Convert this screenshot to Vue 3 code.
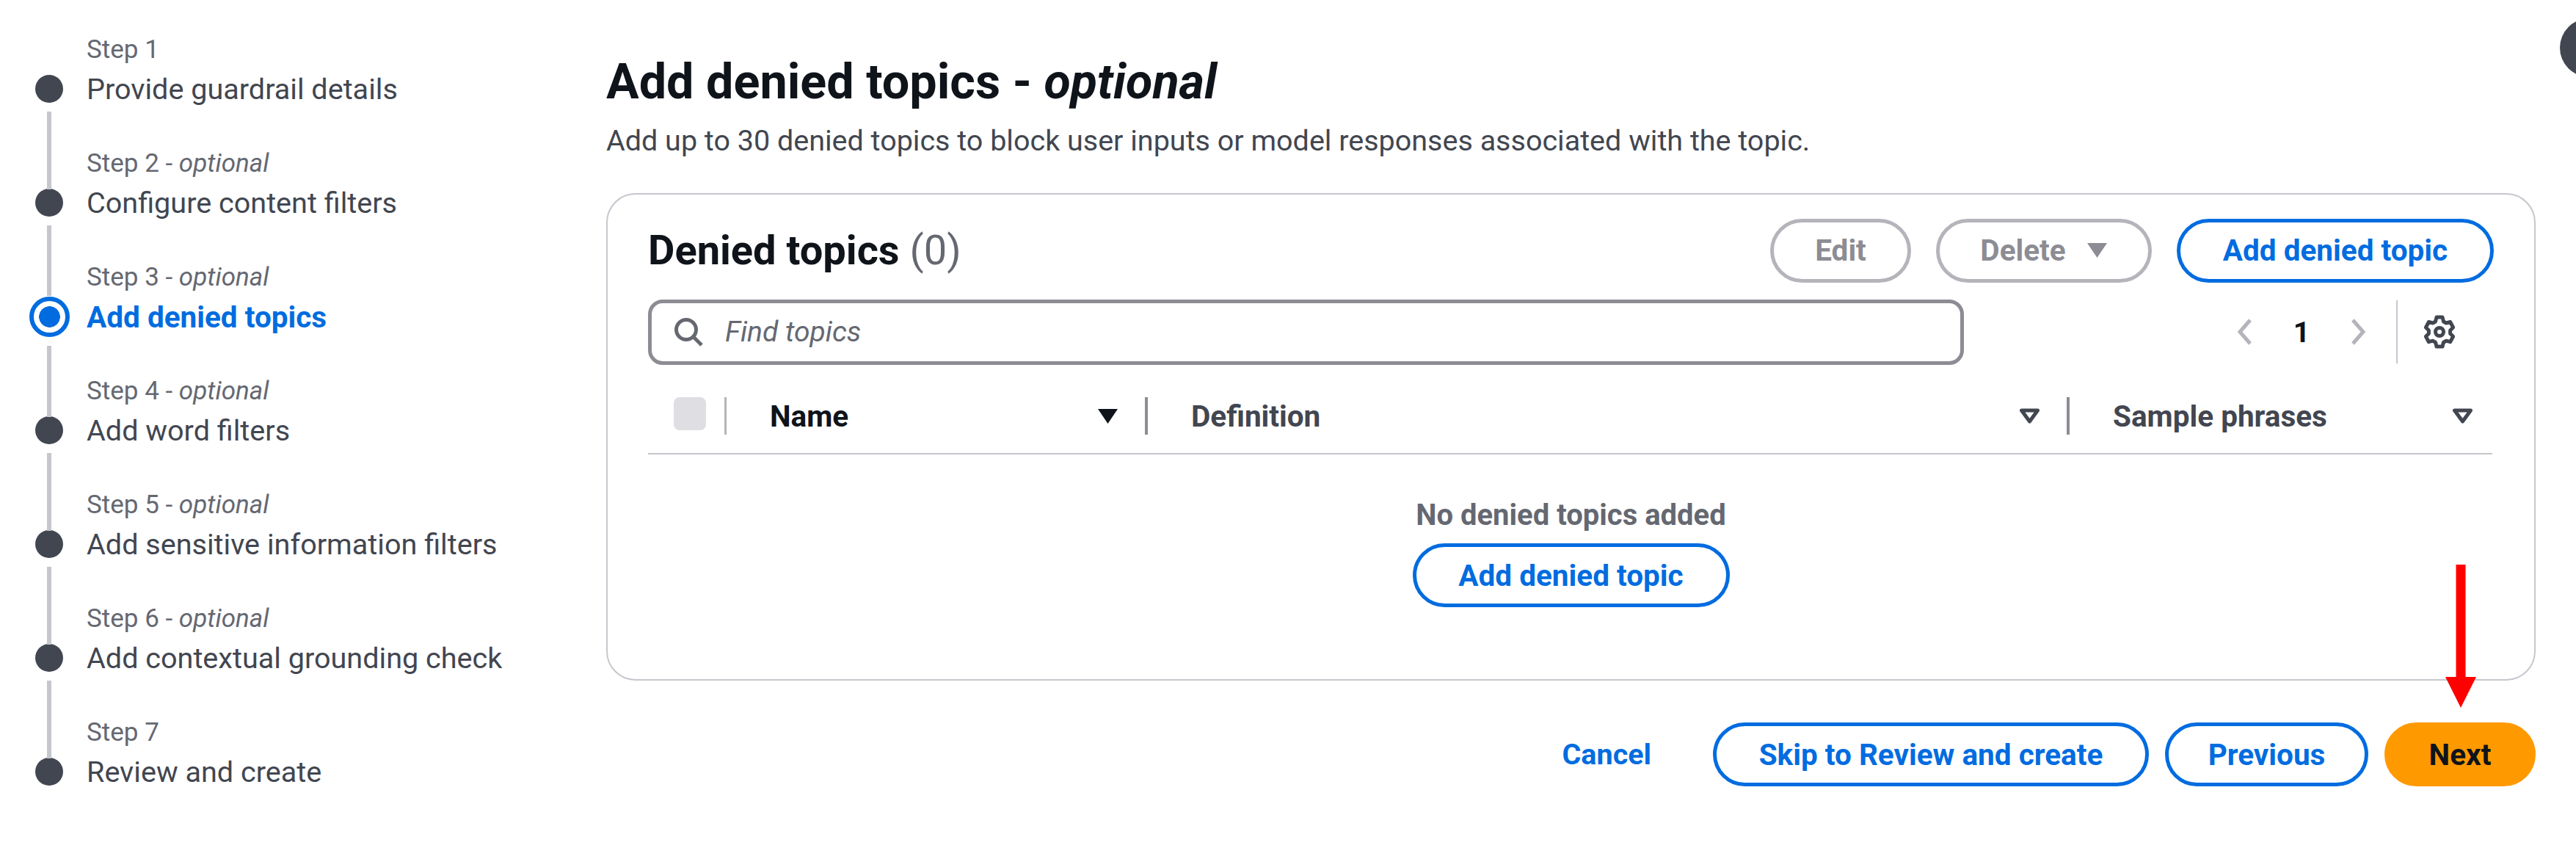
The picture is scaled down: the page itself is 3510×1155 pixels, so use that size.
<script setup>
const steps = [
  { label: 'Step 1', title: 'Provide guardrail details' },
  { label: 'Step 2', optional: true, title: 'Configure content filters' },
  { label: 'Step 3', optional: true, title: 'Add denied topics', active: true },
  { label: 'Step 4', optional: true, title: 'Add word filters' },
  { label: 'Step 5', optional: true, title: 'Add sensitive information filters' },
  { label: 'Step 6', optional: true, title: 'Add contextual grounding check' },
  { label: 'Step 7', title: 'Review and create' },
]
</script>

<template>
  <div class="page">
    <nav class="wizard">
      <div v-for="(s, i) in steps" :key="s.label" class="step" :class="{ active: s.active, first: i === 0 }">
        <div class="step-label">{{ s.label }}<template v-if="s.optional"> - <i>optional</i></template></div>
        <div class="step-row">
          <span class="marker"><span class="dot"></span></span>
          <span class="step-title">{{ s.title }}</span>
        </div>
      </div>
    </nav>

    <main class="main">
      <h1 class="page-title">Add denied topics - <i>optional</i></h1>
      <p class="page-desc">Add up to 30 denied topics to block user inputs or model responses associated with the topic.</p>

      <section class="card">
        <header class="card-head">
          <h2 class="card-title">Denied topics <span class="count">(0)</span></h2>
          <div class="actions">
            <button class="btn disabled edit">Edit</button>
            <button class="btn disabled del">Delete
              <svg class="caret" viewBox="0 0 29 22"><path d="M1 1h27L14.500 21z" fill="currentColor" /></svg>
            </button>
            <button class="btn add">Add denied topic</button>
          </div>
        </header>

        <div class="tools">
          <div class="search">
            <svg class="search-icon" viewBox="0 0 40 40" fill="none" stroke="#656871" stroke-width="5">
              <circle cx="17" cy="17" r="13.500" />
              <path d="M26.500 26.500 38 38" />
            </svg>
            <span class="placeholder">Find topics</span>
          </div>
          <div class="pager">
            <svg class="chev" viewBox="0 0 22 36" fill="none" stroke="#b4b4bb" stroke-width="5"><path d="M19 2 5 18l14 16" /></svg>
            <span class="page-num">1</span>
            <svg class="chev" viewBox="0 0 22 36" fill="none" stroke="#b4b4bb" stroke-width="5"><path d="M3 2l14 16L3 34" /></svg>
          </div>
          <div class="prefs">
            <svg class="gear" viewBox="0 0 44 46" fill="none" stroke="#424650" stroke-width="5" stroke-linejoin="round">
              <path d="M18 3h8l1.500 6 3.600 2 5.500-1.500 4 7.500-4 4v4.200l4 4-4 7.500-5.500-1.500-3.600 2L26 43h-8l-1.500-5.800-3.600-2-5.500 1.500-4-7.500 4-4v-4.200l-4-4 4-7.500 5.500 1.500 3.600-2z" />
              <circle cx="22" cy="23" r="5.500" />
            </svg>
          </div>
        </div>

        <div class="thead">
          <div class="th-check"><span class="checkbox"></span></div>
          <div class="th th-name">
            <span class="th-text dark">Name</span>
            <svg class="sort" viewBox="0 0 29 22"><path d="M1 1h27L14.500 21z" fill="#0f141a" /></svg>
          </div>
          <div class="th th-def">
            <span class="th-text">Definition</span>
            <svg class="sort" viewBox="0 0 29 22"><path d="M3.500 3h22L14.500 18z" fill="none" stroke="#424650" stroke-width="5" stroke-linejoin="round" /></svg>
          </div>
          <div class="th th-sample">
            <span class="th-text">Sample phrases</span>
            <svg class="sort" viewBox="0 0 29 22"><path d="M3.500 3h22L14.500 18z" fill="none" stroke="#424650" stroke-width="5" stroke-linejoin="round" /></svg>
          </div>
        </div>

        <div class="empty">
          <div class="empty-text">No denied topics added</div>
          <button class="btn add">Add denied topic</button>
        </div>
      </section>

      <footer class="footer">
        <a class="cancel">Cancel</a>
        <button class="btn skip">Skip to Review and create</button>
        <button class="btn prev">Previous</button>
        <div class="next-wrap">
          <svg class="arrow" viewBox="0 0 42 195"><path d="M14.500 0h13v153H42L21 195 0 153h14.500z" fill="#ff0000" /></svg>
          <button class="btn next">Next</button>
        </div>
      </footer>
    </main>

    <span class="avatar"></span>
  </div>
</template>

<style>
html, body { background: #fff; }
</style>

<style scoped>
.page {
  position: relative;
  display: flex;
  width: 3510px;
  height: 1155px;
  overflow: hidden;
  font-family: Roboto, "Open Sans", sans-serif;
  font-size: 39.6px;
  color: #424650;
}

/* wizard side nav */
.wizard {
  width: 826px;
  flex: none;
  padding: 40px 0 0 39px;
  box-sizing: border-box;
}
.step {
  position: relative;
  height: 155px;
}
.step-label {
  height: 54px;
  line-height: 55px;
  padding-left: 79px;
  font-size: 35px;
  color: #656871;
}
.step-row {
  display: flex;
  align-items: center;
  height: 54px;
}
.marker {
  width: 56px;
  height: 54px;
  margin-right: 23px;
  display: flex;
  align-items: center;
  justify-content: center;
  flex: none;
}
.dot {
  width: 38px;
  height: 38px;
  border-radius: 50%;
  background: #424650;
}
.step-title {
  line-height: 50px;
  margin-top: 1px;
}
.step:not(.first)::before {
  content: "";
  position: absolute;
  left: 25px;
  top: -43px;
  width: 6px;
  height: 106px;
  background: #c6c6cd;
}
.step.active .dot {
  width: 55px;
  height: 55px;
  box-sizing: border-box;
  border: 6px solid #006ce0;
  background: radial-gradient(circle, #006ce0 0 14px, #fff 14.6px);
}
.step.active .step-title {
  color: #006ce0;
  font-weight: 700;
  font-size: 40.5px;
}
.step.active::before { height: 96px; }
.step.active + .step::before { top: -34px; height: 97px; }

/* main column */
.main {
  flex: none;
  width: 2629px;
  display: flex;
  flex-direction: column;
}
.page-title {
  margin: 75px 0 0;
  font-size: 66.5px;
  line-height: 72px;
  font-weight: 700;
  color: #0f141a;
}
.page-desc {
  margin: 0;
  padding-top: 20px;
  font-size: 39.5px;
  line-height: 50px;
  color: #424650;
}
.card {
  margin-top: 46px;
  height: 664px;
  box-sizing: border-box;
  border: 2px solid #c6c6cd;
  border-radius: 40px;
  padding: 33px 55px 0;
  background: #fff;
}
.card-head {
  display: flex;
  align-items: center;
  justify-content: space-between;
  height: 86px;
}
.card-title {
  margin: 0;
  font-size: 56px;
  font-weight: 700;
  color: #0f141a;
}
.count {
  font-weight: 400;
  color: #656871;
}
.actions {
  display: flex;
  gap: 34px;
}
.btn {
  height: 87px;
  box-sizing: border-box;
  border: 5px solid #006ce0;
  border-radius: 44px;
  background: #fff;
  color: #006ce0;
  font-family: inherit;
  font-size: 40.5px;
  font-weight: 700;
  padding: 0;
  display: inline-flex;
  align-items: center;
  justify-content: center;
}
.btn.disabled {
  border-color: #b4b4bb;
  color: #8c8c94;
}
.edit { width: 192px; }
.del { width: 294px; gap: 28px; }
.caret { width: 29px; height: 22px; color: #8c8c94; }
.add { width: 432px; }

.tools {
  display: flex;
  align-items: center;
  height: 90px;
  margin-top: 23px;
}
.search {
  width: 1793px;
  height: 89px;
  box-sizing: border-box;
  border: 5px solid #8c8c94;
  border-radius: 20px;
  display: flex;
  align-items: center;
  padding-left: 30px;
  gap: 30px;
}
.search-icon { width: 40px; height: 40px; }
.placeholder {
  font-style: italic;
  font-size: 39px;
  color: #656871;
}
.pager {
  margin-left: 371px;
  display: flex;
  align-items: center;
  gap: 55px;
  flex: none;
}
.chev { width: 22px; height: 36px; }
.page-num {
  color: #0f141a;
  font-weight: 700;
  width: 24px;
  text-align: center;
}
.prefs {
  margin-left: 40px;
  border-left: 2px solid #c6c6cd;
  height: 86px;
  padding-left: 35px;
  display: flex;
  align-items: center;
}
.gear { width: 44px; height: 46px; }

.thead {
  display: flex;
  align-items: flex-start;
  margin-top: 44px;
  height: 76px;
  border-bottom: 2px solid #c6c6cd;
  width: 2513px;
}
.th-check {
  width: 107px;
  display: flex;
  padding-left: 35px;
  box-sizing: border-box;
  height: 51px;
  position: relative;
}
.checkbox {
  width: 44px;
  height: 45px;
  border-radius: 8px;
  background: #dedee3;
}
.th-check::after,
.th::after {
  content: "";
  position: absolute;
  right: 0;
  top: 0;
  width: 4px;
  height: 51px;
  background: #8c8c94;
}
.th {
  position: relative;
  display: flex;
  align-items: center;
  height: 51px;
  box-sizing: border-box;
  flex: none;
  justify-content: space-between;
  padding-right: 40px;
}
.th-check::after { width: 3px; background: #b4b4bb; }
.th-name { width: 574px; padding-left: 59px; }
.th-def { width: 1256px; padding-left: 59px; }
.th-sample { width: 576px; padding-left: 59px; padding-right: 26px; }
.th-sample::after { display: none; }
.th-text {
  font-weight: 700;
  color: #424650;
  font-size: 40.5px;
}
.th-text.dark { color: #0f141a; }
.sort { width: 29px; height: 22px; flex: none; }

.empty {
  display: flex;
  flex-direction: column;
  align-items: center;
  margin-top: 56px;
}
.empty-text {
  font-weight: 700;
  color: #656871;
  font-size: 40px;
  line-height: 54px;
  margin-bottom: 11px;
}

.footer {
  display: flex;
  align-items: center;
  justify-content: flex-end;
  gap: 22px;
  margin-top: 57px;
}
.cancel {
  color: #006ce0;
  font-weight: 700;
  font-size: 39.5px;
  margin-right: 62px;
}
.skip { width: 594px; }
.prev { width: 277px; }
.next-wrap { position: relative; }
.next {
  width: 206px;
  background: #ff9900;
  border-color: #ff9900;
  color: #0f141a;
}
.arrow {
  position: absolute;
  left: 83px;
  bottom: 107px;
  width: 42px;
  height: 195px;
}

.avatar {
  position: absolute;
  left: 3488px;
  top: 25px;
  width: 80px;
  height: 80px;
  border-radius: 50%;
  background: #424650;
}
</style>
